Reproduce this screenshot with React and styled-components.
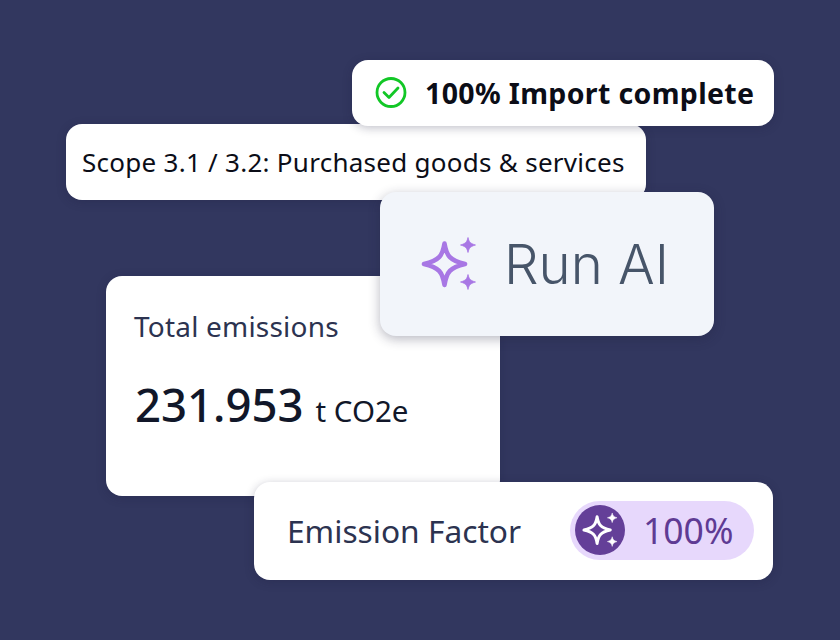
import styled, { createGlobalStyle } from 'styled-components';

const GlobalStyle = createGlobalStyle`
  html, body {
    margin: 0;
    padding: 0;
    background: #32375f;
  }
  body {
    font-family: 'Noto Sans', sans-serif;
  }
`;

const Stage = styled.div`
  position: relative;
  width: 840px;
  height: 640px;
  overflow: hidden;
  background: #32375f;
`;

const Card = styled.div`
  position: absolute;
  display: flex;
  align-items: center;
  box-sizing: border-box;
  background: #fff;
  border-radius: 16px;
  box-shadow: 0 2px 10px rgba(30, 30, 60, 0.28);
`;

const ImportCard = styled(Card)`
  left: 352px;
  top: 60px;
  width: 422px;
  height: 66px;
  padding-left: 23px;
  gap: 18px;
  z-index: 2;
`;

const ImportText = styled.span`
  font-size: 28.5px;
  font-weight: 700;
  color: #0b0d17;
  letter-spacing: 0.35px;
`;

const ScopeCard = styled(Card)`
  left: 66px;
  top: 124px;
  width: 580px;
  height: 76px;
  padding-left: 16px;
  z-index: 1;
`;

const ScopeText = styled.span`
  font-size: 26px;
  color: #0b0d17;
  letter-spacing: 0.27px;
`;

const RunCard = styled(Card)`
  left: 380px;
  top: 192px;
  width: 334px;
  height: 144px;
  padding-left: 41px;
  gap: 27px;
  background: #f2f5fa;
  box-shadow: 0 3px 12px rgba(30, 30, 60, 0.32);
  z-index: 3;
`;

const RunText = styled.span`
  font-family: 'Inter', sans-serif;
  font-size: 54.5px;
  font-weight: 300;
  color: #475569;
`;

const TotalCard = styled(Card)`
  left: 106px;
  top: 276px;
  width: 394px;
  height: 220px;
  padding: 32px 29px 0;
  flex-direction: column;
  align-items: flex-start;
  z-index: 1;
`;

const TotalLabel = styled.div`
  font-size: 28px;
  line-height: 36px;
  letter-spacing: 0.2px;
  color: #2c3350;
  margin-left: -1px;
`;

const TotalValue = styled.div`
  display: flex;
  align-items: baseline;
  gap: 12px;
  margin-top: 30px;
  color: #111729;
`;

const Amount = styled.span`
  font-size: 45.5px;
  font-weight: 500;
  line-height: 60px;
`;

const Unit = styled.span`
  font-size: 29.5px;
`;

const FactorCard = styled(Card)`
  left: 254px;
  top: 482px;
  width: 519px;
  height: 98px;
  padding: 0 19px 2px 33px;
  justify-content: space-between;
  z-index: 2;
`;

const FactorLabel = styled.span`
  font-size: 31.7px;
  color: #2c3350;
`;

const Pill = styled.div`
  display: flex;
  align-items: center;
  width: 184px;
  height: 59px;
  box-sizing: border-box;
  padding-left: 5px;
  gap: 18px;
  border-radius: 30px;
  background: #e7d8fc;
`;

const Badge = styled.div`
  display: flex;
  align-items: center;
  justify-content: center;
  width: 50px;
  height: 50px;
  border-radius: 50%;
  background: #643f98;
`;

const PillText = styled.span`
  font-size: 35.5px;
  color: #5f3b94;
`;

function Sparkles({ size, color }) {
  return (
    <svg width={size} height={size} viewBox="0 0 56 56" fill="none">
      <path
        d="M23.5 7.5 C25.5 20 29 24.5 44 28 C29 31.5 25.5 36 23.5 49 C21.5 36 18 31.5 3 28 C18 24.5 21.5 20 23.5 7.5 Z"
        stroke={color}
        strokeWidth="4.6"
        strokeLinejoin="round"
      />
      <path
        d="M47 1.5 C48 6 49.5 7.6 54.5 9 C49.5 10.4 48 12 47 16.5 C46 12 44.5 10.4 39.5 9 C44.5 7.6 46 6 47 1.5 Z"
        fill={color}
        stroke={color}
        strokeWidth="0.8"
        strokeLinejoin="round"
      />
      <path
        d="M47 38.5 C48 43 49.5 44.6 54.5 46 C49.5 47.4 48 49 47 53.5 C46 49 44.5 47.4 39.5 46 C44.5 44.6 46 43 47 38.5 Z"
        fill={color}
        stroke={color}
        strokeWidth="0.8"
        strokeLinejoin="round"
      />
    </svg>
  );
}

function CheckCircle() {
  return (
    <svg width="32" height="32" viewBox="0 0 32 32" fill="none">
      <circle cx="16" cy="15.5" r="14" stroke="#12c726" strokeWidth="2.8" />
      <path
        d="M9 15.5 L14 20.5 L23 11"
        stroke="#12c726"
        strokeWidth="2.8"
        strokeLinecap="round"
        strokeLinejoin="round"
      />
    </svg>
  );
}

export default function App() {
  return (
    <Stage>
      <GlobalStyle />
      <ImportCard>
        <CheckCircle />
        <ImportText>100% Import complete</ImportText>
      </ImportCard>
      <ScopeCard>
        <ScopeText>Scope 3.1 / 3.2: Purchased goods &amp; services</ScopeText>
      </ScopeCard>
      <RunCard>
        <Sparkles size={56} color="#a877e4" />
        <RunText>Run AI</RunText>
      </RunCard>
      <TotalCard>
        <TotalLabel>Total emissions</TotalLabel>
        <TotalValue>
          <Amount>231.953</Amount>
          <Unit>t CO2e</Unit>
        </TotalValue>
      </TotalCard>
      <FactorCard>
        <FactorLabel>Emission Factor</FactorLabel>
        <Pill>
          <Badge>
            <Sparkles size={36} color="#fff" />
          </Badge>
          <PillText>100%</PillText>
        </Pill>
      </FactorCard>
    </Stage>
  );
}
